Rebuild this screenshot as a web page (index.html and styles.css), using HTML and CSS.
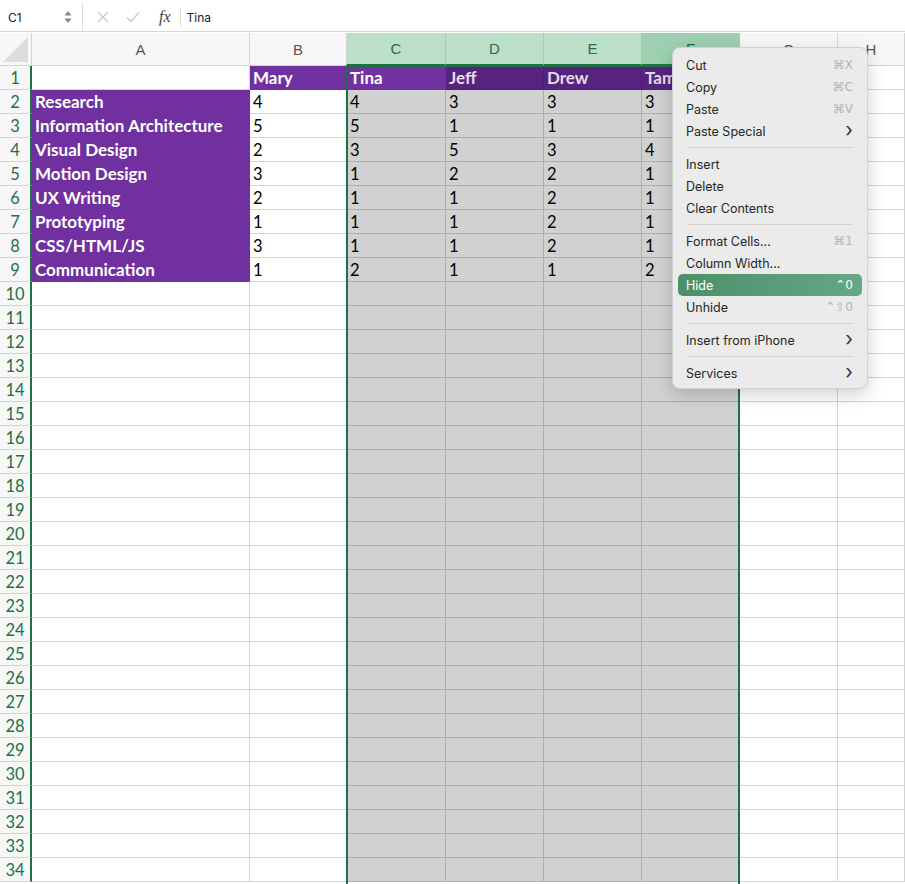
FILE: index.html
```html
<!DOCTYPE html>
<html lang="en">
<head>
    <meta charset="UTF-8">
    <title>Skills matrix</title>
    <link rel="stylesheet" href="styles.css">
</head>
<body>

    <div class="formula-bar">
        <div class="name-box">
            <span>C1</span>
            <svg class="spin" width="8" height="14" viewBox="0 0 8 14"><path d="M4 1 L7.5 5.5 H0.5 Z M4 13 L7.5 8.5 H0.5 Z" fill="#8a8a8a"/></svg>
        </div>
        <div class="fx-tools">
            <svg width="12" height="12" viewBox="0 0 12 12"><path d="M1 1 L11 11 M11 1 L1 11" stroke="#c9c9c9" stroke-width="1.4"/></svg>
            <svg width="14" height="12" viewBox="0 0 14 12"><path d="M1 6.5 L5 10.5 L13 1.5" stroke="#c9c9c9" stroke-width="1.4" fill="none"/></svg>
            <span class="fx">fx</span>
        </div>
        <div class="formula">Tina</div>
    </div>

    <div class="sheet">
        <div class="row head">
            <div class="corner"><span class="tri"></span></div>
            <div class="ch">A</div>
            <div class="ch">B</div>
            <div class="ch sel">C</div>
            <div class="ch sel">D</div>
            <div class="ch sel">E</div>
            <div class="ch sel last">F</div>
            <div class="ch">G</div>
            <div class="ch">H</div>
        </div>

        <div class="row"><div class="rh">1</div><div class="c"></div><div class="c hd">Mary</div><div class="c hd active">Tina</div><div class="c hd dim">Jeff</div><div class="c hd dim">Drew</div><div class="c hd dim">Tam</div><div class="c"></div><div class="c"></div></div>
        <div class="row"><div class="rh">2</div><div class="c skill">Research</div><div class="c">4</div><div class="c s">4</div><div class="c s">3</div><div class="c s">3</div><div class="c s">3</div><div class="c"></div><div class="c"></div></div>
        <div class="row"><div class="rh">3</div><div class="c skill">Information Architecture</div><div class="c">5</div><div class="c s">5</div><div class="c s">1</div><div class="c s">1</div><div class="c s">1</div><div class="c"></div><div class="c"></div></div>
        <div class="row"><div class="rh">4</div><div class="c skill">Visual Design</div><div class="c">2</div><div class="c s">3</div><div class="c s">5</div><div class="c s">3</div><div class="c s">4</div><div class="c"></div><div class="c"></div></div>
        <div class="row"><div class="rh">5</div><div class="c skill">Motion Design</div><div class="c">3</div><div class="c s">1</div><div class="c s">2</div><div class="c s">2</div><div class="c s">1</div><div class="c"></div><div class="c"></div></div>
        <div class="row"><div class="rh">6</div><div class="c skill">UX Writing</div><div class="c">2</div><div class="c s">1</div><div class="c s">1</div><div class="c s">2</div><div class="c s">1</div><div class="c"></div><div class="c"></div></div>
        <div class="row"><div class="rh">7</div><div class="c skill">Prototyping</div><div class="c">1</div><div class="c s">1</div><div class="c s">1</div><div class="c s">2</div><div class="c s">1</div><div class="c"></div><div class="c"></div></div>
        <div class="row"><div class="rh">8</div><div class="c skill">CSS/HTML/JS</div><div class="c">3</div><div class="c s">1</div><div class="c s">1</div><div class="c s">2</div><div class="c s">1</div><div class="c"></div><div class="c"></div></div>
        <div class="row"><div class="rh">9</div><div class="c skill">Communication</div><div class="c">1</div><div class="c s">2</div><div class="c s">1</div><div class="c s">1</div><div class="c s">2</div><div class="c"></div><div class="c"></div></div>
        <div class="row"><div class="rh">10</div><div class="c"></div><div class="c"></div><div class="c s"></div><div class="c s"></div><div class="c s"></div><div class="c s"></div><div class="c"></div><div class="c"></div></div>
        <div class="row"><div class="rh">11</div><div class="c"></div><div class="c"></div><div class="c s"></div><div class="c s"></div><div class="c s"></div><div class="c s"></div><div class="c"></div><div class="c"></div></div>
        <div class="row"><div class="rh">12</div><div class="c"></div><div class="c"></div><div class="c s"></div><div class="c s"></div><div class="c s"></div><div class="c s"></div><div class="c"></div><div class="c"></div></div>
        <div class="row"><div class="rh">13</div><div class="c"></div><div class="c"></div><div class="c s"></div><div class="c s"></div><div class="c s"></div><div class="c s"></div><div class="c"></div><div class="c"></div></div>
        <div class="row"><div class="rh">14</div><div class="c"></div><div class="c"></div><div class="c s"></div><div class="c s"></div><div class="c s"></div><div class="c s"></div><div class="c"></div><div class="c"></div></div>
        <div class="row"><div class="rh">15</div><div class="c"></div><div class="c"></div><div class="c s"></div><div class="c s"></div><div class="c s"></div><div class="c s"></div><div class="c"></div><div class="c"></div></div>
        <div class="row"><div class="rh">16</div><div class="c"></div><div class="c"></div><div class="c s"></div><div class="c s"></div><div class="c s"></div><div class="c s"></div><div class="c"></div><div class="c"></div></div>
        <div class="row"><div class="rh">17</div><div class="c"></div><div class="c"></div><div class="c s"></div><div class="c s"></div><div class="c s"></div><div class="c s"></div><div class="c"></div><div class="c"></div></div>
        <div class="row"><div class="rh">18</div><div class="c"></div><div class="c"></div><div class="c s"></div><div class="c s"></div><div class="c s"></div><div class="c s"></div><div class="c"></div><div class="c"></div></div>
        <div class="row"><div class="rh">19</div><div class="c"></div><div class="c"></div><div class="c s"></div><div class="c s"></div><div class="c s"></div><div class="c s"></div><div class="c"></div><div class="c"></div></div>
        <div class="row"><div class="rh">20</div><div class="c"></div><div class="c"></div><div class="c s"></div><div class="c s"></div><div class="c s"></div><div class="c s"></div><div class="c"></div><div class="c"></div></div>
        <div class="row"><div class="rh">21</div><div class="c"></div><div class="c"></div><div class="c s"></div><div class="c s"></div><div class="c s"></div><div class="c s"></div><div class="c"></div><div class="c"></div></div>
        <div class="row"><div class="rh">22</div><div class="c"></div><div class="c"></div><div class="c s"></div><div class="c s"></div><div class="c s"></div><div class="c s"></div><div class="c"></div><div class="c"></div></div>
        <div class="row"><div class="rh">23</div><div class="c"></div><div class="c"></div><div class="c s"></div><div class="c s"></div><div class="c s"></div><div class="c s"></div><div class="c"></div><div class="c"></div></div>
        <div class="row"><div class="rh">24</div><div class="c"></div><div class="c"></div><div class="c s"></div><div class="c s"></div><div class="c s"></div><div class="c s"></div><div class="c"></div><div class="c"></div></div>
        <div class="row"><div class="rh">25</div><div class="c"></div><div class="c"></div><div class="c s"></div><div class="c s"></div><div class="c s"></div><div class="c s"></div><div class="c"></div><div class="c"></div></div>
        <div class="row"><div class="rh">26</div><div class="c"></div><div class="c"></div><div class="c s"></div><div class="c s"></div><div class="c s"></div><div class="c s"></div><div class="c"></div><div class="c"></div></div>
        <div class="row"><div class="rh">27</div><div class="c"></div><div class="c"></div><div class="c s"></div><div class="c s"></div><div class="c s"></div><div class="c s"></div><div class="c"></div><div class="c"></div></div>
        <div class="row"><div class="rh">28</div><div class="c"></div><div class="c"></div><div class="c s"></div><div class="c s"></div><div class="c s"></div><div class="c s"></div><div class="c"></div><div class="c"></div></div>
        <div class="row"><div class="rh">29</div><div class="c"></div><div class="c"></div><div class="c s"></div><div class="c s"></div><div class="c s"></div><div class="c s"></div><div class="c"></div><div class="c"></div></div>
        <div class="row"><div class="rh">30</div><div class="c"></div><div class="c"></div><div class="c s"></div><div class="c s"></div><div class="c s"></div><div class="c s"></div><div class="c"></div><div class="c"></div></div>
        <div class="row"><div class="rh">31</div><div class="c"></div><div class="c"></div><div class="c s"></div><div class="c s"></div><div class="c s"></div><div class="c s"></div><div class="c"></div><div class="c"></div></div>
        <div class="row"><div class="rh">32</div><div class="c"></div><div class="c"></div><div class="c s"></div><div class="c s"></div><div class="c s"></div><div class="c s"></div><div class="c"></div><div class="c"></div></div>
        <div class="row"><div class="rh">33</div><div class="c"></div><div class="c"></div><div class="c s"></div><div class="c s"></div><div class="c s"></div><div class="c s"></div><div class="c"></div><div class="c"></div></div>
        <div class="row"><div class="rh">34</div><div class="c"></div><div class="c"></div><div class="c s"></div><div class="c s"></div><div class="c s"></div><div class="c s"></div><div class="c"></div><div class="c"></div></div>

        <!-- selection outline for columns C:F -->
        <div class="selection"></div>

        <ul class="menu">
            <li><span>Cut</span><span class="key">⌘X</span></li>
            <li><span>Copy</span><span class="key">⌘C</span></li>
            <li><span>Paste</span><span class="key">⌘V</span></li>
            <li><span>Paste Special</span><span class="arrow">›</span></li>
            <li class="sep"></li>
            <li><span>Insert</span></li>
            <li><span>Delete</span></li>
            <li><span>Clear Contents</span></li>
            <li class="sep"></li>
            <li><span>Format Cells...</span><span class="key">⌘1</span></li>
            <li><span>Column Width...</span></li>
            <li class="hover"><span>Hide</span><span class="key">⌃0</span></li>
            <li><span>Unhide</span><span class="key">⌃⇧0</span></li>
            <li class="sep"></li>
            <li><span>Insert from iPhone</span><span class="arrow">›</span></li>
            <li class="sep"></li>
            <li><span>Services</span><span class="arrow">›</span></li>
        </ul>
    </div>

</body>
</html>
```

FILE: styles.css
```css
html, body {
    height: 100%;
}
body {
    margin: 0;
    font-family: Lato, "Open Sans", sans-serif;
    background: #fff;
    overflow: hidden;
}
.formula-bar {
    display: flex;
    align-items: center;
    height: 32px;
    box-sizing: border-box;
    padding-top: 3px;
    border-bottom: 1px solid #d6d6d6;
    font-family: Inter, "Liberation Sans", sans-serif;
    font-size: 12px;
    color: #222;
}
.name-box {
    display: flex;
    align-items: center;
    justify-content: space-between;
    width: 83px;
    box-sizing: border-box;
    height: 100%;
    padding: 0 10px 0 8px;
    border-right: 1px solid #dcdcdc;
}
.fx-tools {
    display: flex;
    align-items: center;
    gap: 17px;
    padding: 0 9px 0 14px;
    height: 19px;
    border-right: 1px solid #dcdcdc;
}
.fx {
    font-family: "Liberation Serif", serif;
    font-style: italic;
    font-size: 16px;
    color: #444;
    margin-left: 2px;
}
.formula {
    padding-left: 6px;
}
.sheet {
    position: relative;
    margin-top: 1px;
    height: 851px;
    overflow: hidden;
}
.row {
    display: grid;
    grid-template-columns: 32px 218px 97px 99px 98px 98px 98px 98px 1fr;
    height: 24px;
}
.row > div {
    box-sizing: border-box;
    border-right: 1px solid #d4d4d4;
    border-bottom: 1px solid #d4d4d4;
}
.head {
    height: 33px;
}
.corner {
    position: relative;
    background: #f7f7f7;
}
.tri {
    position: absolute;
    right: 3px;
    bottom: 3px;
    width: 0;
    height: 0;
    border-left: 25px solid transparent;
    border-bottom: 25px solid #dcdcdc;
}
.ch {
    display: flex;
    align-items: center;
    justify-content: center;
    background: #f7f7f7;
    font-family: "Liberation Sans", sans-serif;
    font-size: 15px;
    color: #555;
}
.ch.sel {
    background: #bbdfc8;
    color: #1f6f43;
    border-right-color: #9fcfb0;
    border-bottom: 2px solid #1e7145;
}
.ch.last {
    background: #9dd0b0;
}
.rh {
    display: flex;
    align-items: center;
    justify-content: center;
    background: #f7f7f7;
    color: #1e7145;
    font-size: 16.5px;
    border-right: 2px solid #1e7145 !important;
}
.c {
    display: flex;
    align-items: center;
    padding: 0 0 0 3px;
    font-size: 16.5px;
    color: #000;
    white-space: nowrap;
    overflow: hidden;
}
.c.s {
    background: #d1d1d1;
    border-color: #adadad;
}
.c.hd,
.c.skill {
    background: #7030a0;
    color: #fff;
    font-weight: bold;
    font-size: 17px;
    border-color: #7030a0;
}
.c.hd.dim {
    background: #56247e;
    border-color: #4c2170;
    color: #e3dcea;
}
.c.hd.active {
    background: #7131a1;
}
.selection {
    position: absolute;
    left: 346px;
    top: 32px;
    width: 394px;
    bottom: 0;
    box-sizing: border-box;
    border: 2px solid #1e7145;
    border-bottom: none;
    pointer-events: none;
}
.menu {
    position: absolute;
    left: 672px;
    top: 14px;
    width: 196px;
    margin: 0;
    padding: 6px 0 4px;
    list-style: none;
    box-sizing: border-box;
    background: #ebebeb;
    border: 1px solid #d2d2d2;
    border-radius: 8px;
    box-shadow: 0 6px 18px rgba(0, 0, 0, 0.18);
    font-family: Inter, "Noto Sans", sans-serif;
    font-size: 12.5px;
    color: #262626;
}
.menu li {
    display: flex;
    align-items: center;
    justify-content: space-between;
    height: 22px;
    margin: 0 5px;
    padding: 0 9px 0 8px;
    border-radius: 5px;
}
.menu li.sep {
    height: 11px;
    margin: 0 14px;
    padding: 0;
    position: relative;
}
.menu li.sep::after {
    content: "";
    position: absolute;
    left: 0;
    right: 0;
    top: 5px;
    border-top: 1px solid #d3d3d3;
}
.menu .key {
    color: #b3b3b3;
    font-family: "DejaVu Sans", sans-serif;
    font-size: 12px;
}
.menu .arrow {
    font-size: 20px;
    line-height: 1;
    margin-top: -3px;
    color: #333;
}
.menu li.hover {
    background: linear-gradient(to right, #4b9069, #66a785);
    color: #fff;
}
.menu li.hover .key {
    color: #fff;
}
```
